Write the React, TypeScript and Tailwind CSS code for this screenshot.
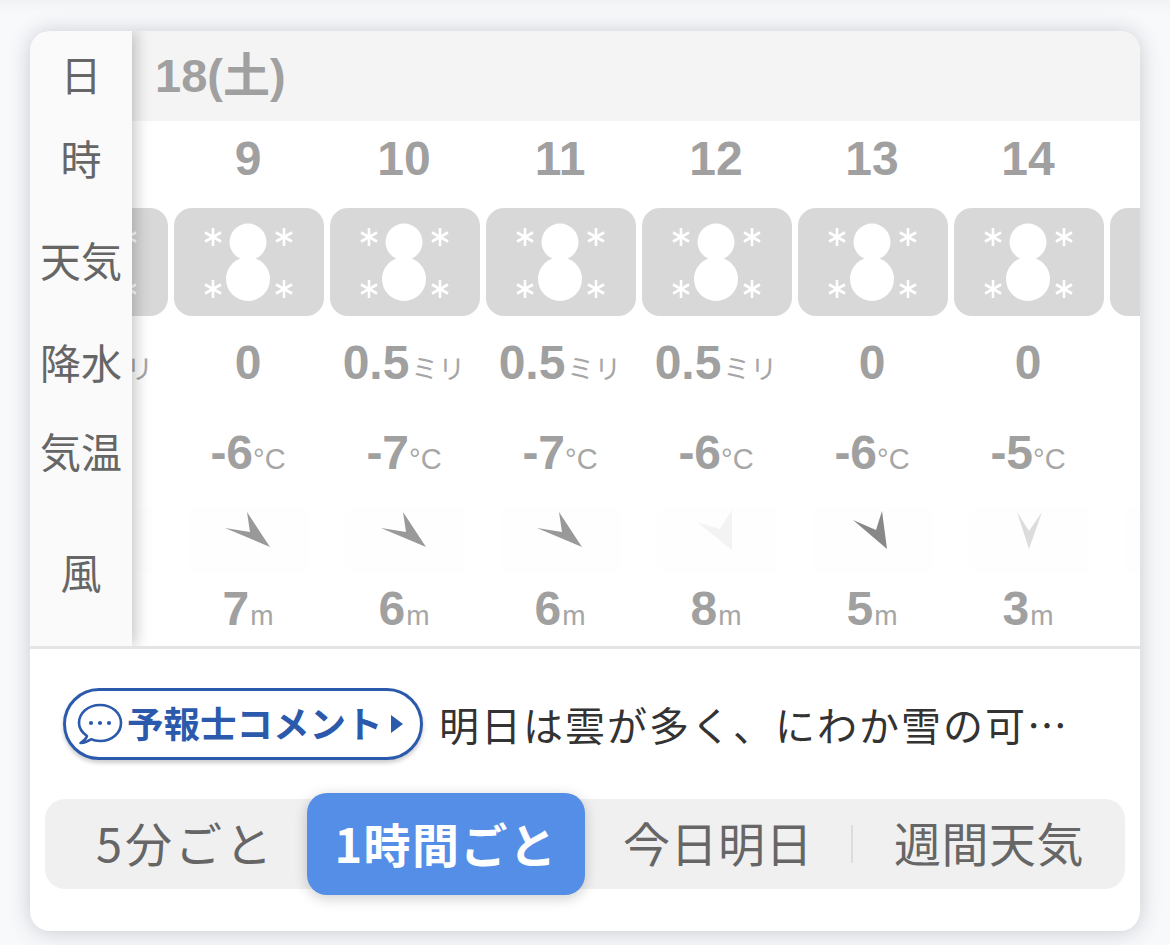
const Snow = () => (
  <div className="h-[108px] w-[150px] shrink-0 rounded-[18px] bg-[#d8d8d8]">
    <svg width="150" height="108" viewBox="0 0 150 108">
      <circle cx="74" cy="34" r="18.5" fill="#fff" />
      <circle cx="74" cy="71" r="22" fill="#fff" />
      {[
        [39, 29],
        [110, 29],
        [39, 81],
        [110, 81],
      ].map(([x, y], i) => (
        <g key={i} stroke="#fff" strokeWidth="2.6">
          <line x1={x} y1={y - 9} x2={x} y2={y + 9} />
          <line x1={x - 8} y1={y - 4.5} x2={x + 8} y2={y + 4.5} />
          <line x1={x - 8} y1={y + 4.5} x2={x + 8} y2={y - 4.5} />
        </g>
      ))}
    </svg>
  </div>
);

const Arrow = ({ points, color }: { points: string; color: string }) => (
  <div className="h-[66px] w-[120px] bg-[#fefefe]">
    <svg width="120" height="66" viewBox="0 0 120 66">
      <polygon points={points} fill={color} />
    </svg>
  </div>
);

const data = [
  { h: "8", rain: "0.5", rainU: true, t: "-6", w: "7", a: "81,40 58,5 61,25 36,21", c: "#999999" },
  { h: "9", rain: "0", rainU: false, t: "-6", w: "7", a: "81,40 58,5 61,25 36,21", c: "#999999" },
  { h: "10", rain: "0.5", rainU: true, t: "-7", w: "6", a: "81,40 58,5 61,25 36,21", c: "#999999" },
  { h: "11", rain: "0.5", rainU: true, t: "-7", w: "6", a: "81,40 58,5 61,25 36,21", c: "#999999" },
  { h: "12", rain: "0.5", rainU: true, t: "-6", w: "8", a: "75,43 75,3 63,22 40,15", c: "#f3f3f3" },
  { h: "13", rain: "0", rainU: false, t: "-6", w: "5", a: "74,42 69,4 63,23 40,13", c: "#888888" },
  { h: "14", rain: "0", rainU: false, t: "-5", w: "3", a: "60,42 48,5 60,24 73,5", c: "#dcdcdc" },
  { h: "15", rain: "0", rainU: false, t: "-5", w: "3", a: "60,42 48,5 60,24 73,5", c: "#dcdcdc" },
];

const Num = "font-['Liberation_Sans','Noto_Sans_CJK_JP',sans-serif] font-bold text-[48px] leading-none text-[#a0a0a0]";
const Unit = "font-['Liberation_Sans','Noto_Sans_CJK_JP',sans-serif] font-normal leading-none text-[#a6a6a6]";
const Label = "flex items-center justify-center pb-[6px] font-['Noto_Sans_CJK_JP',sans-serif] text-[41px] leading-none text-[#666666]";
const Tab = "flex items-center justify-center pb-[6px] font-['Noto_Sans_CJK_JP',sans-serif] text-[47px] leading-none text-[#666666]";

export default function App() {
  return (
    <div className="h-[945px] w-[1170px] overflow-hidden bg-[#f8f9fb] bg-[linear-gradient(#f1f2f4,#f8f9fb_14px)] px-[30px] pt-[31px]">
      <div className="h-[900px] w-[1110px] overflow-hidden rounded-[20px] bg-white shadow-[0_1px_22px_rgba(50,55,70,0.24)]">
        <div className="relative h-[615px] overflow-hidden">
          <div className="flex h-[90px] items-center bg-[#f4f4f4] pb-[2px] pl-[125px] font-['Liberation_Sans','Noto_Sans_CJK_JP',sans-serif] text-[47px] font-bold leading-none text-[#a0a0a0]">
            18(土)
          </div>
          <div className="ml-[-15px] flex">
            {data.map((d) => (
              <div key={d.h} className="flex w-[156px] shrink-0 flex-col items-center">
                <div className="flex h-[75px] items-center pr-[2px]">
                  <span className={Num}>{d.h}</span>
                </div>
                <div className="mt-[12px]">
                  <Snow />
                </div>
                <div className="flex h-[94px] items-center pr-[2px]">
                  <div className="flex items-baseline">
                    <span className={Num}>{d.rain}</span>
                    {d.rainU && <span className={`${Unit} ml-[2px] text-[27px]`}>ミリ</span>}
                  </div>
                </div>
                <div className="flex h-[86px] items-center pr-[2px]">
                  <div className="flex items-baseline">
                    <span className={Num}>{d.t}</span>
                    <span className={`${Unit} text-[29px]`}>°C</span>
                  </div>
                </div>
                <div className="h-[80px] pt-[11px]">
                  <Arrow points={d.a} color={d.c} />
                </div>
                <div className="flex h-[66px] items-center pr-[2px]">
                  <div className="flex items-baseline">
                    <span className={Num}>{d.w}</span>
                    <span className={`${Unit} ml-[1px] text-[28px]`}>m</span>
                  </div>
                </div>
              </div>
            ))}
          </div>
          <div className="absolute inset-y-0 left-0 flex w-[102px] flex-col bg-[#fafafa] shadow-[4px_0_14px_rgba(0,0,0,0.22)]">
            <div className={`${Label} h-[90px]`}>日</div>
            <div className={`${Label} h-[78px]`}>時</div>
            <div className={`${Label} h-[126px]`}>天気</div>
            <div className={`${Label} h-[78px]`}>降水</div>
            <div className={`${Label} h-[100px]`}>気温</div>
            <div className={`${Label} h-[143px]`}>風</div>
          </div>
        </div>
        <div className="h-[3px] bg-[#e4e4e4]" />
        <div className="flex items-center gap-[16px] px-[33px] pt-[39px]">
          <div className="flex h-[72px] w-[360px] shrink-0 items-center rounded-full border-[3px] border-[#2b5aad] bg-white pl-[11px] shadow-[0_3px_4px_rgba(0,0,0,0.2)]">
            <svg width="46" height="42" viewBox="0 0 46 42" className="shrink-0">
              <path
                d="M10 33 C5 29.500 2 25 2 20 C2 10 11 2 23 2 C35 2 44 10 44 20 C44 30 35 38 23 38 C19.500 38 16.500 37.400 14 36.200 C11 38.500 7.500 39.700 3.500 40 C6.800 38 9 36 10 33 Z"
                fill="#fff"
                stroke="#2b5aad"
                strokeWidth="2.6"
                strokeLinejoin="round"
              />
              <circle cx="14" cy="20" r="2.100" fill="#2b5aad" />
              <circle cx="23" cy="20" r="2.100" fill="#2b5aad" />
              <circle cx="32" cy="20" r="2.100" fill="#2b5aad" />
            </svg>
            <span className="ml-[4px] whitespace-nowrap pb-[2px] font-['Noto_Sans_CJK_JP',sans-serif] text-[36.5px] font-bold leading-none text-[#2b5aad]">
              予報士コメント
            </span>
            <svg width="13" height="18" viewBox="0 0 13 18" className="ml-[8px] shrink-0">
              <polygon points="0,0 12,9 0,18" fill="#2b5aad" />
            </svg>
          </div>
          <div className="whitespace-nowrap pb-[1px] font-['Noto_Sans_CJK_JP',sans-serif] text-[40px] leading-none tracking-[2px] text-[#333333]">
            明日は雲が多く、にわか雪の可…
          </div>
        </div>
        <div className="mx-[15px] mt-[39px] flex h-[90px] items-center rounded-[20px] bg-[#f0f0f0]">
          <div className={`${Tab} h-full w-[262px] pl-[19px] tracking-[3px]`}>5分ごと</div>
          <div className="flex h-[102px] w-[278px] shrink-0 items-center justify-center rounded-[20px] bg-[#558ee6] pb-[4px] font-['Noto_Sans_CJK_JP',sans-serif] text-[47px] font-bold leading-none tracking-[1.5px] text-white shadow-[0_3px_14px_rgba(0,0,0,0.2)]">
            1時間ごと
          </div>
          <div className={`${Tab} h-full w-[266px] tracking-[0.5px]`}>今日明日</div>
          <div className="h-[38px] w-[2px] bg-[#dcdcdc]" />
          <div className={`${Tab} h-full flex-1 tracking-[0.5px]`}>週間天気</div>
        </div>
      </div>
    </div>
  );
}
